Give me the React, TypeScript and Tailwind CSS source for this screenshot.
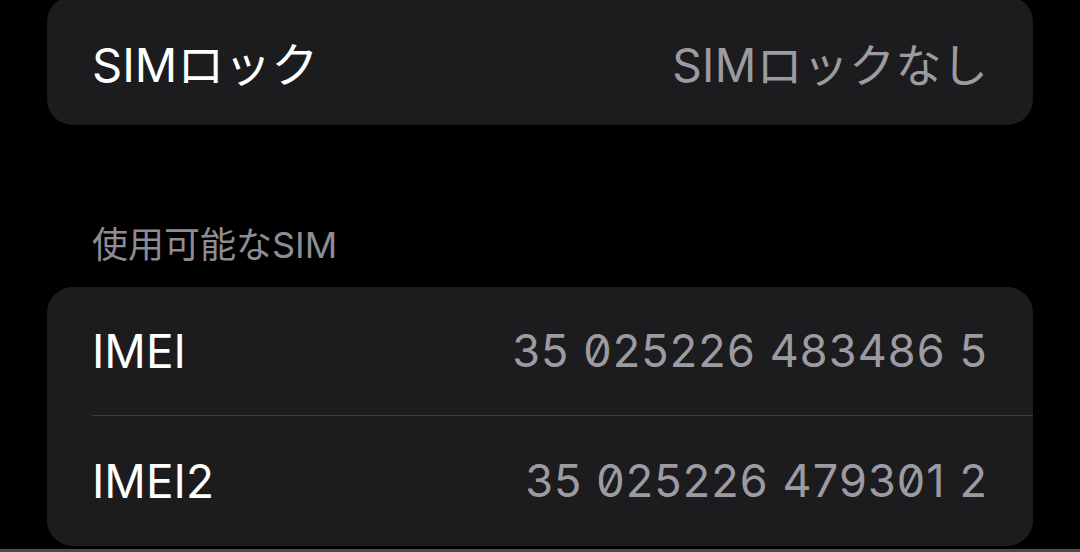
const FONT = "font-['Inter','Noto_Sans_CJK_JP',sans-serif]";

const SIM_ROWS = [
  { label: 'IMEI', value: '35 025226 483486 5' },
  { label: 'IMEI2', value: '35 025226 479301 2' },
];

export default function App() {
  return (
    <div className={`w-[1080px] h-[552px] bg-black overflow-hidden flex flex-col ${FONT}`}>
      <div className="px-[47px] flex flex-col">
        {/* SIM lock card (top cut off) */}
        <div className="-mt-[4px] h-[129px] pt-[8px] rounded-[26px] bg-[#1c1c1e] flex items-center justify-between pl-[45px] pr-[45px]">
          <span className="text-[47px] leading-[58px] text-white">SIMロック</span>
          <span className="text-[46px] leading-[58px] tracking-[0.3px] text-[#9b9ba1]">SIMロックなし</span>
        </div>

        {/* Section header */}
        <div className="pt-[98px] pb-[20px] pl-[45px]">
          <p className="text-[36px] leading-[44px] text-[#8d8d93]">使用可能なSIM</p>
        </div>

        {/* Available SIM card */}
        <div className="rounded-[26px] bg-[#1c1c1e] flex flex-col">
          {SIM_ROWS.map((row, i) => (
            <div key={row.label} className="flex flex-col">
              {i > 0 && <div className="ml-[45px] h-px bg-[#3d3d40]" />}
              <div
                className={`${i === 0 ? 'h-[128px]' : 'h-[130px]'} flex items-center justify-between pl-[45px] pr-[45px]`}
              >
                <span className="text-[46px] leading-[58px] text-white">{row.label}</span>
                <span className="text-[45px] leading-[58px] tracking-[1.1px] text-[#9b9ba1] slashed-zero">
                  {row.value}
                </span>
              </div>
            </div>
          ))}
        </div>
      </div>
      <div className="h-[3px] flex-shrink-0" />
      <div className="h-[3px] flex-shrink-0 bg-[#4a4a4c]" />
    </div>
  );
}
